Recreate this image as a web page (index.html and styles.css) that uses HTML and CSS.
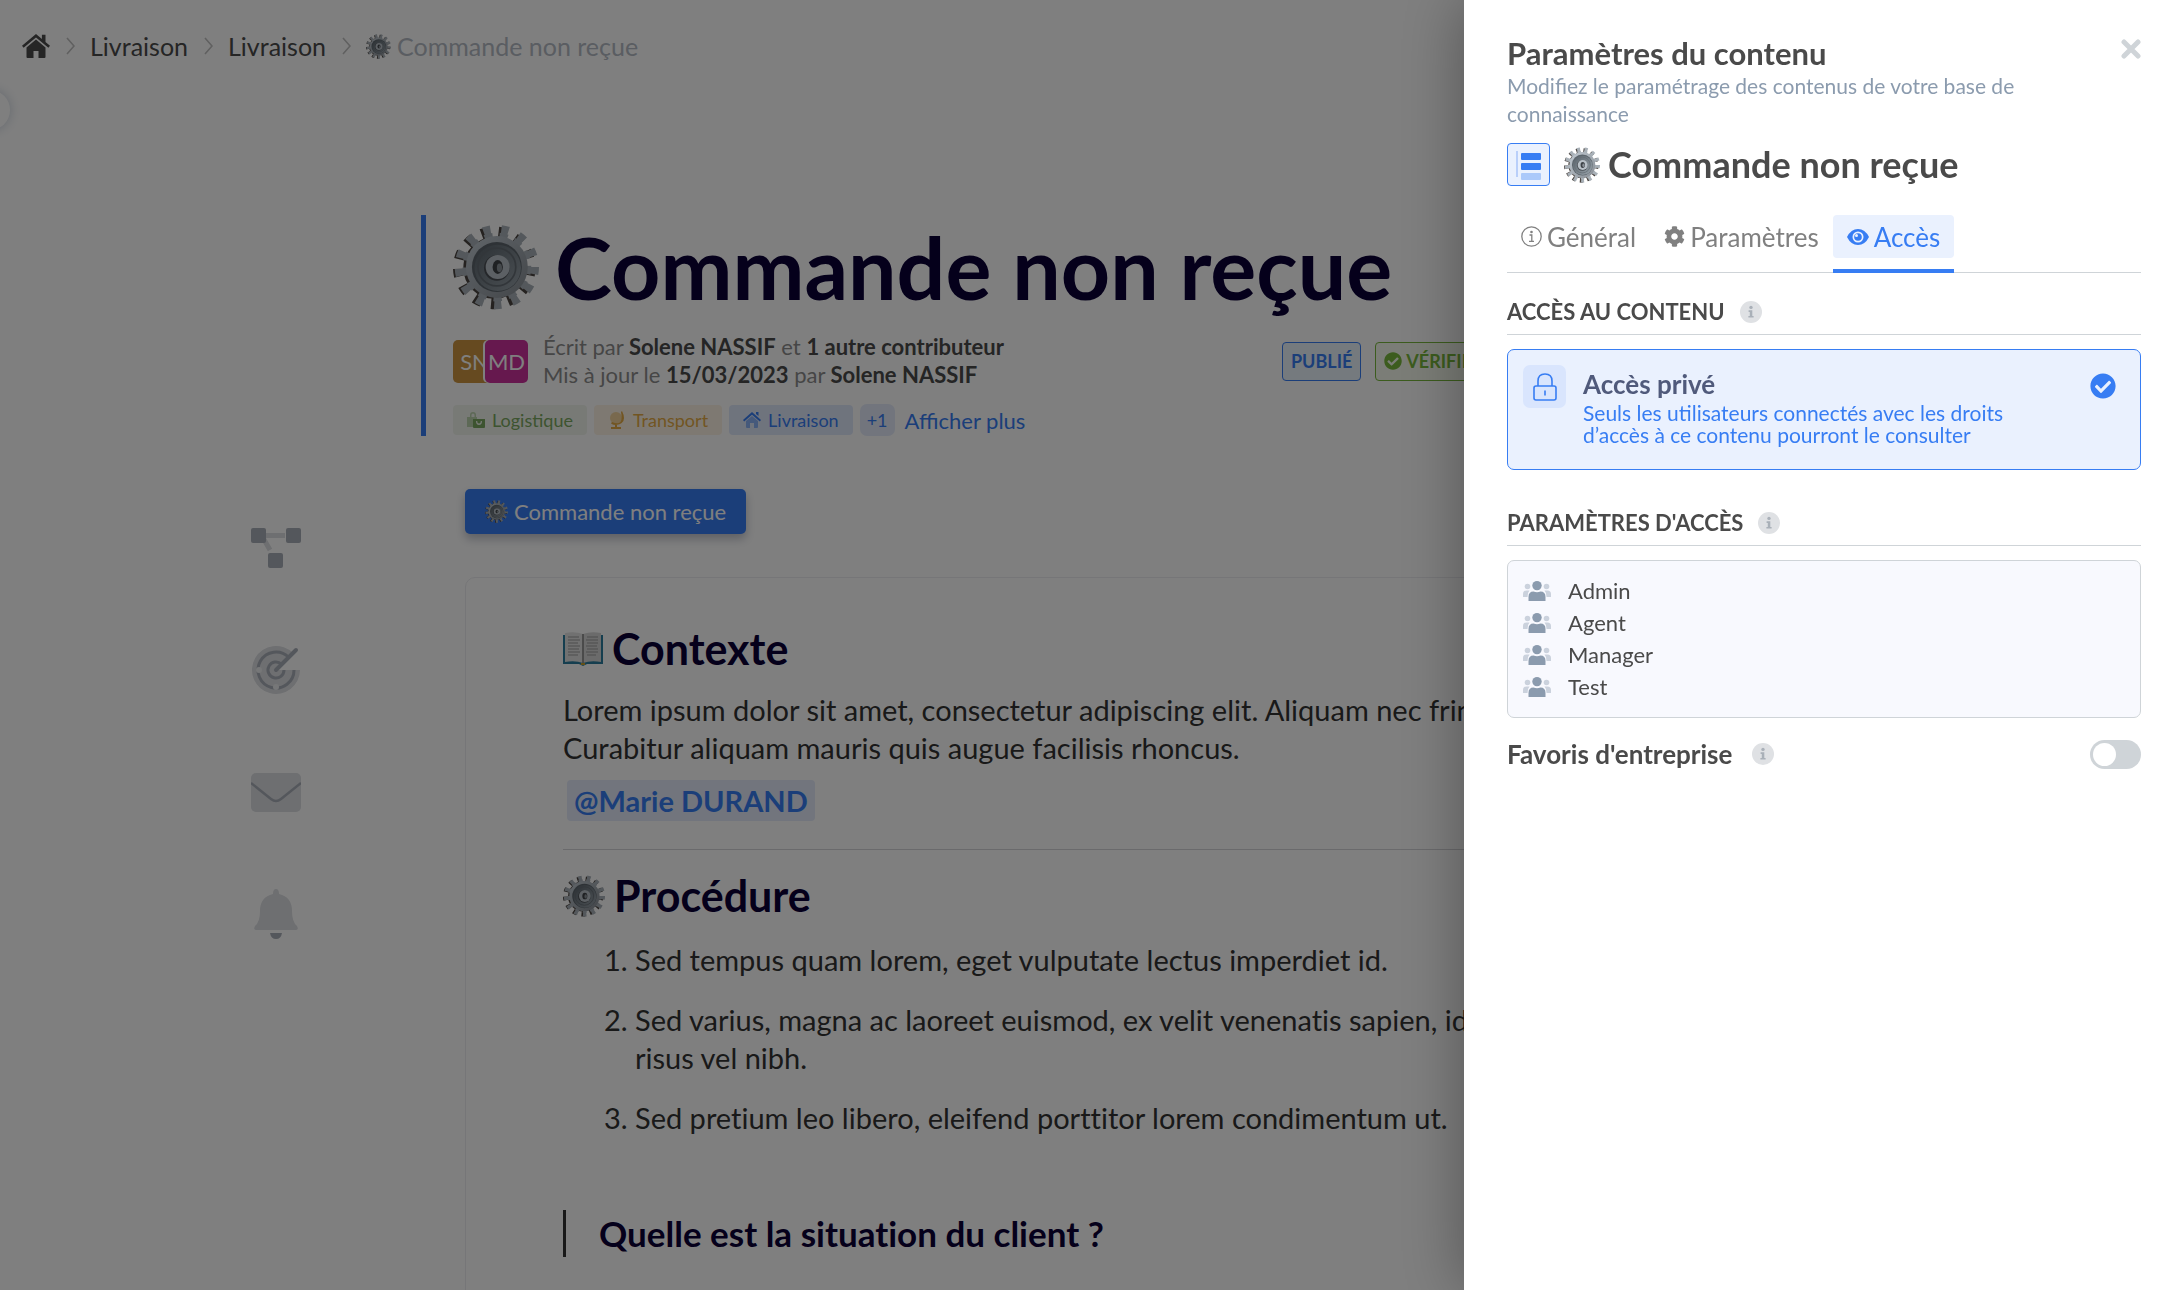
FILE: index.html
```html
<!DOCTYPE html>
<html lang="fr">
<head>
    <meta charset="UTF-8">
    <meta name="viewport" content="width=device-width, initial-scale=1.0">
    <title>Commande non reçue</title>
    <link rel="stylesheet" href="styles.css">
</head>
<body>
    <!-- shared icons -->
    <svg class="sprite" aria-hidden="true">
        <defs>
            <linearGradient id="metal" x1="0" y1="0" x2="1" y2="1">
                <stop offset="0" stop-color="#c3ccd4"/>
                <stop offset="1" stop-color="#858b92"/>
            </linearGradient>
            <linearGradient id="metalDark" x1="0" y1="0" x2="1" y2="1">
                <stop offset="0" stop-color="#59636b"/>
                <stop offset="1" stop-color="#98a2aa"/>
            </linearGradient>
        </defs>
        <symbol id="gear" viewBox="0 0 100 100">
            <g fill="none" stroke="#4b4541">
                <circle cx="48" cy="51" r="41" stroke-width="14" pathLength="130" stroke-dasharray="4.4 5.6"/>
                <circle cx="48" cy="51" r="32" stroke-width="8"/>
            </g>
            <g fill="none" stroke="#a9b1b8">
                <circle cx="51" cy="50" r="43" stroke-width="12" pathLength="130" stroke-dasharray="4 6"/>
                <circle cx="51" cy="50" r="37" stroke-width="6" pathLength="130" stroke-dasharray="5.4 4.6" stroke-dashoffset="0.7"/>
            </g>
            <circle cx="51" cy="50" r="36" fill="url(#metal)"/>
            <circle cx="51" cy="50" r="29" fill="#5c656c"/>
            <circle cx="52" cy="51" r="27" fill="url(#metalDark)"/>
            <circle cx="51" cy="50" r="22" fill="none" stroke="#656d74" stroke-width="2"/>
            <circle cx="51" cy="51" r="15" fill="#4a4f55"/>
            <circle cx="52" cy="50" r="14" fill="#b9c1c8"/>
            <ellipse cx="52" cy="50" rx="6" ry="8" fill="#3e4247"/>
            <ellipse cx="54" cy="51" rx="3" ry="5" fill="#8b9299"/>
        </symbol>
        <symbol id="book" viewBox="0 0 40 34">
            <path d="M0 3h40v29H24l-4 2-4-2H0z" fill="#2a7d9e"/>
            <path d="M18 31h4v2h-4z" fill="#c7a02c"/>
            <path d="M2 1q10-2 18 1v29q-8-3-18-1z" fill="#e2e2e2"/>
            <path d="M38 1q-10-2-18 1v29q8-3 18-1z" fill="#d6d6d6"/>
            <path d="M20 2v29" stroke="#777" stroke-width="1.4"/>
            <path d="M5 5h11M5 8h12M5 11h10M5 14h12M5 17h11M5 20h12M5 23h10M24 5h11M23 8h12M24 11h11M23 14h11M24 17h11M23 20h12M24 23h9" stroke="#9b9b9b" stroke-width="1"/>
        </symbol>
        <symbol id="chevron" viewBox="0 0 10 24">
            <path d="M2 4l7 8-7 8" fill="none" stroke="currentColor" stroke-width="1.6"/>
        </symbol>
        <symbol id="check" viewBox="0 0 512 512">
            <path fill="currentColor" d="M504 256c0 137-111 248-248 248S8 393 8 256 119 8 256 8s248 111 248 248zM227 387l184-184c6-6 6-16 0-22l-22-23c-7-6-17-6-23 0L216 308l-70-70c-6-6-16-6-23 0l-22 23c-6 6-6 16 0 22l104 104c6 6 16 6 22 0z"/>
        </symbol>
        <symbol id="info" viewBox="0 0 22 22">
            <circle cx="11" cy="11" r="11" fill="#dfe1e4"/>
            <circle cx="11" cy="6.4" r="1.7" fill="#a9b0b8"/>
            <path d="M8.6 9.2h3.7v5.7h1.3v1.7H8.4v-1.7h1.4v-4H8.6z" fill="#a9b0b8"/>
        </symbol>
        <symbol id="users" viewBox="0 0 28 22">
            <g fill="#cbd2dd">
                <circle cx="4.5" cy="6.5" r="2.8"/>
                <circle cx="23.5" cy="6.5" r="2.8"/>
                <path d="M0 17v-3q0-3.500 3.500-3.500h3Q4.500 12.500 4.500 17zM28 17v-3q0-3.500-3.500-3.500h-3q2 2 2 6.500z"/>
            </g>
            <circle cx="14" cy="5.600" r="4.700" fill="#8b9bae"/>
            <path d="M5.500 21v-4q0-5.500 5-5.500 3.500 1.500 7 0 5 0 5 5.500v4z" fill="#8b9bae"/>
        </symbol>
    </svg>

    <div class="page">
        <nav class="breadcrumb" aria-label="Fil d'Ariane">
            <a href="#" class="home" aria-label="Accueil">
                <svg viewBox="0 0 28 24" width="28" height="24" fill="currentColor"><path d="M14 5.500 4.500 13.500V23q0 1 1 1h6v-7h5v7h6q1 0 1-1v-9.500z"/><path d="M14 0 0 11.800l1.600 1.900L14 3.400l12.400 10.300 1.600-1.900-4.500-3.800V.8h-3.600v4.300z"/></svg>
            </a>
            <svg class="sep" width="10" height="24"><use href="#chevron"/></svg>
            <a href="#">Livraison</a>
            <svg class="sep" width="10" height="24"><use href="#chevron"/></svg>
            <a href="#">Livraison</a>
            <svg class="sep" width="10" height="24"><use href="#chevron"/></svg>
            <span class="current"><svg width="25" height="25"><use href="#gear"/></svg>Commande non reçue</span>
        </nav>
        <button class="side-handle" aria-label="Ouvrir le menu"></button>

        <div class="layout">
            <nav class="tools" aria-label="Outils">
                <button aria-label="Arborescence">
                    <svg viewBox="0 0 50 50"><path d="M14 12.500h20M11 13l8 14" stroke="#dcdee2" stroke-width="5"/><g fill="#a9aeb8"><rect y="5" width="15" height="15" rx="2"/><rect x="35" y="5" width="15" height="15" rx="2"/><rect x="17" y="30" width="15" height="15" rx="2"/></g></svg>
                </button>
                <button aria-label="Objectifs">
                    <svg viewBox="0 0 50 50"><path d="M49 25A24 24 0 1 1 42 8L25 25z" fill="#dcdee2"/><g fill="none" stroke="#a9aeb8" stroke-width="3"><path d="M43 25a18 18 0 1 1-5.300-12.700"/><path d="M33 25a8 8 0 1 1-2.500-5.800"/><path d="M25 25 45 5" stroke-width="4" stroke-linecap="round"/></g><circle cx="8" cy="25" r="3" fill="#eceef0"/><circle cx="25" cy="42" r="3" fill="#eceef0"/></svg>
                </button>
                <button aria-label="Messages">
                    <svg viewBox="0 0 50 50"><rect y="6" width="50" height="39" rx="5" fill="#dcdee2"/><path d="M0 16 20 32q5 4 10 0l20-16" fill="none" stroke="#a9aeb8" stroke-width="2.500"/></svg>
                </button>
                <button aria-label="Notifications">
                    <svg viewBox="0 0 50 50"><path d="M25 0q3 0 3 5 13 3 13 17 0 11 5 15 2 4-1 4H5q-3 0-1-4 5-4 5-15Q9 8 22 5q0-5 3-5z" fill="#dcdee2"/><path d="M19 44h12q-1 6-6 6t-6-6z" fill="#a9aeb8"/></svg>
                </button>
            </nav>

            <main class="article">
                <header class="hero">
                    <h1><svg width="86" height="86"><use href="#gear"/></svg>Commande non reçue</h1>
                    <div class="meta">
                        <div class="avatars">
                            <span class="avatar avatar-sn">SN</span>
                            <span class="avatar avatar-md">MD</span>
                        </div>
                        <p>Écrit par <b>Solene NASSIF</b> et <b>1 autre contributeur</b><br>Mis à jour le <b>15/03/2023</b> par <b>Solene NASSIF</b></p>
                        <div class="badges">
                            <span class="badge">PUBLIÉ</span>
                            <span class="badge badge-green"><svg width="18" height="18"><use href="#check"/></svg>VÉRIFIÉ</span>
                        </div>
                    </div>
                    <div class="tags">
                        <span class="tag tag-green"><svg viewBox="0 0 18 18" width="18" height="18" fill="currentColor"><path d="M0 6h10v2H6v8H0zM3 6V4q0-3 3-3t3 3v2H7.500V4q0-1.500-1.500-1.500T4.500 4v2z" opacity=".45"/><path d="M6 8h12v8q0 1-1 1H7q-1 0-1-1zm3 2q0 4 3 4t3-4h-1.200q0 2.600-1.800 2.600T10.200 10z" fill-rule="evenodd"/></svg>Logistique</span>
                        <span class="tag tag-orange"><svg viewBox="0 0 18 18" width="18" height="18" fill="currentColor"><circle cx="8" cy="7" r="6" opacity=".45"/><path d="M14 0q6 12-6 14-3 0-5-1.500l1-1.500q12 5 9-10zM7 13h2v3h4v2H3v-2h4z"/></svg>Transport</span>
                        <span class="tag tag-blue"><svg viewBox="0 0 18 18" width="18" height="18" fill="currentColor"><path d="m9 5 6 5v6q0 1-1 1h-3v-5H7v5H4q-1 0-1-1v-6z" opacity=".5"/><path d="m9 1 9 8-1.200 1.500L9 3.700l-7.800 6.800L0 9zM13 1h2.500v4L13 3z"/></svg>Livraison</span>
                        <span class="tag tag-more">+1</span>
                        <a href="#">Afficher plus</a>
                    </div>
                </header>

                <button class="step"><svg width="23" height="23"><use href="#gear"/></svg>Commande non reçue</button>

                <section class="content">
                    <h2><svg width="40" height="34"><use href="#book"/></svg>Contexte</h2>
                    <p>Lorem ipsum dolor sit amet, consectetur adipiscing elit. Aliquam nec fringilla.<br>Curabitur aliquam mauris quis augue facilisis rhoncus.</p>
                    <a href="#" class="mention">@Marie DURAND</a>
                    <hr>
                    <h2><svg width="42" height="42"><use href="#gear"/></svg>Procédure</h2>
                    <ol>
                        <li>Sed tempus quam lorem, eget vulputate lectus imperdiet id.</li>
                        <li>Sed varius, magna ac laoreet euismod, ex velit venenatis sapien, id egestas risus vel nibh.</li>
                        <li>Sed pretium leo libero, eleifend porttitor lorem condimentum ut.</li>
                    </ol>
                    <h3>Quelle est la situation du client ?</h3>
                </section>
            </main>
        </div>
    </div>

    <div class="overlay"></div>

    <aside class="drawer" role="dialog" aria-labelledby="drawerTitle">
        <button class="close" aria-label="Fermer">
            <svg viewBox="0 0 20 20" width="20" height="20"><path d="m3 3 14 14M17 3 3 17" stroke="currentColor" stroke-width="5" stroke-linecap="round"/></svg>
        </button>
        <h2 class="drawer-title" id="drawerTitle">Paramètres du contenu</h2>
        <p class="subtitle">Modifiez le paramétrage des contenus de votre base de connaissance</p>

        <div class="doc">
            <span class="doc-icon">
                <svg viewBox="0 0 26 30" width="26" height="30"><path d="M1 1v26" stroke="#a8c3f8" stroke-width="1.500"/><g fill="#377df3"><rect x="5" y="3" width="20" height="7" rx="1"/><rect x="5" y="13" width="20" height="7" rx="1"/><rect x="5" y="23" width="20" height="7" rx="1" opacity=".35"/></g></svg>
            </span>
            <h3><svg width="36" height="36"><use href="#gear"/></svg>Commande non reçue</h3>
        </div>

        <div class="tabs" role="tablist">
            <button role="tab"><svg viewBox="0 0 21 21" width="21" height="21"><circle cx="10.500" cy="10.500" r="9.700" fill="none" stroke="currentColor" stroke-width="1.300"/><circle cx="10.500" cy="6" r="1.300" fill="currentColor"/><path d="M8.500 9h2.300v6M8 15.300h5" fill="none" stroke="currentColor" stroke-width="1.300"/></svg>Général</button>
            <button role="tab"><svg viewBox="0 0 512 512" width="21" height="21" fill="currentColor"><path d="M487.400 315.700l-42.600-24.600c4.300-23.200 4.300-47 0-70.200l42.600-24.600c4.900-2.800 7.100-8.600 5.500-14-11.100-35.600-30-67.800-54.700-94.600-3.800-4.100-10-5.100-14.800-2.300L380.800 110c-17.900-15.400-38.500-27.300-60.800-35.100V25.800c0-5.600-3.900-10.500-9.400-11.700-36.700-8.200-74.300-7.800-109.200 0-5.500 1.200-9.400 6.100-9.400 11.700V75c-22.200 7.900-42.800 19.800-60.800 35.100L88.700 85.500c-4.900-2.800-11-1.900-14.800 2.300-24.700 26.700-43.600 58.900-54.700 94.600-1.700 5.400.6 11.200 5.500 14L67.300 221c-4.300 23.200-4.300 47 0 70.200l-42.600 24.600c-4.900 2.800-7.100 8.600-5.500 14 11.100 35.600 30 67.800 54.700 94.600 3.800 4.100 10 5.100 14.800 2.300l42.600-24.600c17.900 15.400 38.500 27.300 60.800 35.100v49.200c0 5.600 3.900 10.500 9.400 11.700 36.700 8.200 74.300 7.800 109.200 0 5.500-1.200 9.400-6.100 9.400-11.700v-49.200c22.200-7.900 42.800-19.800 60.800-35.100l42.600 24.600c4.900 2.800 11 1.900 14.800-2.300 24.700-26.700 43.600-58.900 54.700-94.600 1.500-5.500-.7-11.300-5.600-14.100zM256 336c-44.100 0-80-35.900-80-80s35.900-80 80-80 80 35.900 80 80-35.900 80-80 80z"/></svg>Paramètres</button>
            <button role="tab" class="active" aria-selected="true"><svg viewBox="0 0 22 16" width="22" height="16"><path d="M11 0q7 0 11 8-4 8-11 8T0 8q4-8 11-8z" fill="currentColor"/><circle cx="11" cy="8" r="5.500" fill="#eaf1fe"/><circle cx="11" cy="8" r="3.800" fill="currentColor"/><circle cx="9.500" cy="6.500" r="1.500" fill="#eaf1fe"/></svg>Accès</button>
        </div>

        <h4 class="section-title">ACCÈS AU CONTENU <button class="info" aria-label="Informations"><svg width="22" height="22"><use href="#info"/></svg></button></h4>
        <label class="access">
            <input type="radio" name="access" checked>
            <span class="lock">
                <svg viewBox="0 0 24 28" width="24" height="28" fill="none" stroke="#377df3" stroke-width="1.600"><rect x="1" y="13" width="22" height="14" rx="2"/><path d="M5 13V8q0-7 7-7t7 7v5M12 17.500v5"/></svg>
            </span>
            <span class="access-text">
                <strong>Accès privé</strong>
                <span>Seuls les utilisateurs connectés avec les droits d’accès à ce contenu pourront le consulter</span>
            </span>
            <svg class="access-check" width="26" height="26"><use href="#check"/></svg>
        </label>

        <h4 class="section-title">PARAMÈTRES D'ACCÈS <button class="info" aria-label="Informations"><svg width="22" height="22"><use href="#info"/></svg></button></h4>
        <ul class="groups">
            <li><svg width="28" height="22"><use href="#users"/></svg>Admin</li>
            <li><svg width="28" height="22"><use href="#users"/></svg>Agent</li>
            <li><svg width="28" height="22"><use href="#users"/></svg>Manager</li>
            <li><svg width="28" height="22"><use href="#users"/></svg>Test</li>
        </ul>

        <div class="favorite">
            <label for="favorite">Favoris d'entreprise</label>
            <button class="info" aria-label="Informations"><svg width="22" height="22"><use href="#info"/></svg></button>
            <input type="checkbox" id="favorite" class="switch">
        </div>
    </aside>
</body>
</html>
```
FILE: styles.css
```css
* {
    box-sizing: border-box;
}

body {
    margin: 0;
    overflow: hidden;
    background: #fff;
    color: #333;
    font-family: Lato, "Liberation Sans", sans-serif;
    font-size: 22px;
}

h1, h2, h3, h4, p, ol, ul {
    margin: 0;
    padding: 0;
}

button {
    margin: 0;
    padding: 0;
    border: 0;
    background: none;
    color: inherit;
    font: inherit;
    cursor: pointer;
}

a {
    color: inherit;
    text-decoration: none;
}

svg {
    display: block;
    flex: none;
}

.sprite {
    position: absolute;
    width: 0;
    height: 0;
}

.page {
    height: 100vh;
    overflow: hidden;
}

/* breadcrumb */
.breadcrumb {
    display: flex;
    align-items: center;
    gap: 15px;
    height: 92px;
    padding-left: 22px;
    font-size: 25px;
    color: #4a4a4a;
}

.breadcrumb .sep {
    color: #c0c0c0;
}

.current {
    display: flex;
    align-items: center;
    gap: 6px;
    color: #b4bac4;
}

.side-handle {
    position: absolute;
    left: -30px;
    top: 90px;
    width: 40px;
    height: 40px;
    border-radius: 50%;
    background: #fff;
    box-shadow: 0 0 12px rgba(120, 140, 170, 0.4);
}

/* page grid */
.layout {
    display: grid;
    grid-template-columns: 1fr minmax(0, 1318px) 1fr;
    padding-top: 123px;
}

.tools {
    display: flex;
    flex-direction: column;
    gap: 72px;
    justify-self: end;
    margin-right: 120px;
    padding-top: 308px;
}

.tools button,
.tools svg {
    width: 50px;
    height: 50px;
}

/* article header */
.hero {
    padding-left: 27px;
    border-left: 5px solid #377df3;
}

.hero h1 {
    display: flex;
    align-items: center;
    gap: 16px;
    line-height: 104px;
    font-size: 86px;
    color: #0a0036;
}

.meta {
    display: flex;
    align-items: center;
    gap: 15px;
    margin-top: 14px;
    line-height: 28px;
    color: #8c8c8c;
}

.meta b {
    color: #4a4a4a;
}

.avatars {
    display: flex;
}

.avatar {
    width: 43px;
    height: 43px;
    border-radius: 5px;
    line-height: 43px;
    text-align: center;
    color: #fff;
}

.avatar-sn {
    background: #cc9440;
}

.avatar-md {
    margin-left: -11px;
    background: #cc309c;
    box-shadow: -2px 0 0 #fff;
}

.badges {
    display: flex;
    gap: 14px;
    margin-left: auto;
    padding-right: 258px;
}

.badge {
    display: flex;
    align-items: center;
    gap: 4px;
    height: 39px;
    padding: 0 8px;
    border: 1px solid #377df3;
    border-radius: 4px;
    background: #ebf5fd;
    color: #377df3;
    font-size: 18px;
    font-weight: bold;
}

.badge-green {
    border-color: #78b83c;
    background: #f6fbee;
    color: #78b83c;
}

.tags {
    display: flex;
    align-items: center;
    gap: 7px;
    height: 32px;
    margin-top: 15px;
    color: #377df3;
}

.tags a {
    margin-left: 3px;
}

.tag {
    display: flex;
    align-items: center;
    gap: 7px;
    height: 30px;
    padding: 0 14px;
    border-radius: 4px;
    font-size: 18px;
}

.tag-green {
    background: #f1f5ed;
    color: #7aa860;
}

.tag-orange {
    background: #fdf3e4;
    color: #e5ab45;
}

.tag-blue {
    background: #dfe8fb;
}

.tag-more {
    height: 32px;
    padding: 0 7px;
    border-radius: 7px;
    background: #e4ebfa;
}

/* article body */
.step {
    display: flex;
    align-items: center;
    gap: 6px;
    height: 45px;
    margin: 53px 44px 43px;
    padding: 0 20px;
    border-radius: 5px;
    background: #377df3;
    box-shadow: 0 5px 10px rgba(40, 50, 80, 0.3);
    color: #fff;
}

.content {
    margin: 0 44px;
    padding: 47px 97px;
    border: 1px solid #ececf0;
    border-radius: 10px;
    line-height: 38px;
    font-size: 29px;
    font-variant-ligatures: none;
}

.content h2 {
    display: flex;
    align-items: center;
    gap: 9px;
    line-height: 48px;
    font-size: 43px;
    color: #0a0036;
}

.content p {
    margin-top: 18px;
}

.mention {
    display: block;
    width: fit-content;
    height: 41px;
    margin: 13px 4px 0;
    padding: 0 7px;
    border-radius: 4px;
    background: #e4ebfa;
    color: #377df3;
    font-weight: bold;
    line-height: 41px;
}

.content hr {
    height: 1px;
    margin: 28px 0 22px;
    border: 0;
    background: #d4d4d8;
}

.content ol {
    margin-top: 21px;
    padding-left: 72px;
}

.content li + li {
    margin-top: 22px;
}

.content h3 {
    margin-top: 73px;
    padding-left: 33px;
    border-left: 3px solid #333;
    line-height: 47px;
    font-size: 35px;
    color: #0a0036;
}

.overlay {
    position: fixed;
    inset: 0;
    background: rgba(0, 0, 0, 0.5);
}

/* settings drawer */
.drawer {
    position: fixed;
    top: 0;
    right: 0;
    bottom: 0;
    width: 696px;
    max-width: 100%;
    padding: 36px 19px 36px 43px;
    overflow: auto;
    background: #fff;
    box-shadow: 0 0 60px rgba(0, 0, 0, 0.35);
    color: #4a4a4a;
}

.close {
    position: absolute;
    top: 39px;
    right: 19px;
    color: #cfd4d8;
}

.drawer-title {
    line-height: 34px;
    font-size: 31px;
}

.subtitle {
    margin: 2px 80px 15px 0;
    line-height: 28px;
    font-size: 21px;
    color: #8b9bae;
}

.doc {
    display: flex;
    align-items: center;
    gap: 14px;
}

.doc-icon {
    display: flex;
    align-items: center;
    justify-content: center;
    width: 43px;
    height: 43px;
    border: 1px solid #377df3;
    border-radius: 4px;
    background: #eaf1fe;
}

.doc h3 {
    display: flex;
    align-items: center;
    gap: 8px;
    line-height: 43px;
    font-size: 36px;
}

.tabs {
    display: flex;
    height: 58px;
    margin-top: 29px;
    border-bottom: 1px solid #cfd4d8;
    color: #808080;
}

.tabs button {
    position: relative;
    display: flex;
    align-items: center;
    gap: 5px;
    height: 43px;
    padding: 0 14px;
    border-radius: 4px;
    font-size: 26px;
}

.tabs .active {
    background: #eaf1fe;
    color: #377df3;
}

.tabs .active::after {
    content: "";
    position: absolute;
    left: 0;
    right: 0;
    bottom: -15px;
    height: 4px;
    background: #377df3;
}

.section-title {
    display: flex;
    align-items: center;
    gap: 15px;
    margin: 25px 0 14px;
    padding-bottom: 8px;
    border-bottom: 1px solid #cfd4d8;
    line-height: 28px;
    font-size: 22px;
}

.access {
    position: relative;
    display: flex;
    align-items: flex-start;
    margin-bottom: 39px;
    padding: 15px 24px 23px 15px;
    border: 1px solid #377df3;
    border-radius: 7px;
    background: #eaf1fe;
    cursor: pointer;
}

.access input {
    position: absolute;
    opacity: 0;
}

.lock {
    display: flex;
    align-items: center;
    justify-content: center;
    width: 43px;
    height: 43px;
    border-radius: 7px;
    background: #d9e5fd;
}

.access-text {
    flex: 1;
    margin-left: 17px;
    padding: 3px 80px 0 0;
    line-height: 22px;
    font-size: 21px;
    color: #377df3;
}

.access-text strong {
    display: block;
    margin-bottom: 2px;
    line-height: 32px;
    font-size: 26px;
    color: #505a7b;
}

.access-check {
    margin-top: 8px;
    color: #377df3;
}

.groups {
    padding: 14px 15px;
    border: 1px solid #cfd4d8;
    border-radius: 7px;
    background: #f8f9fe;
    line-height: 32px;
    list-style: none;
}

.groups li {
    display: flex;
    align-items: center;
    gap: 17px;
}

.favorite {
    display: flex;
    align-items: center;
    gap: 20px;
    margin-top: 20px;
    line-height: 32px;
    font-size: 26px;
    font-weight: bold;
}

.switch {
    appearance: none;
    width: 51px;
    height: 29px;
    margin: 0 0 0 auto;
    padding: 3px;
    border-radius: 15px;
    background: #cfd4d8;
    cursor: pointer;
}

.switch::before {
    content: "";
    display: block;
    width: 23px;
    height: 23px;
    border-radius: 50%;
    background: #fff;
}

.switch:checked {
    background: #377df3;
}

.switch:checked::before {
    margin-left: auto;
}
```
